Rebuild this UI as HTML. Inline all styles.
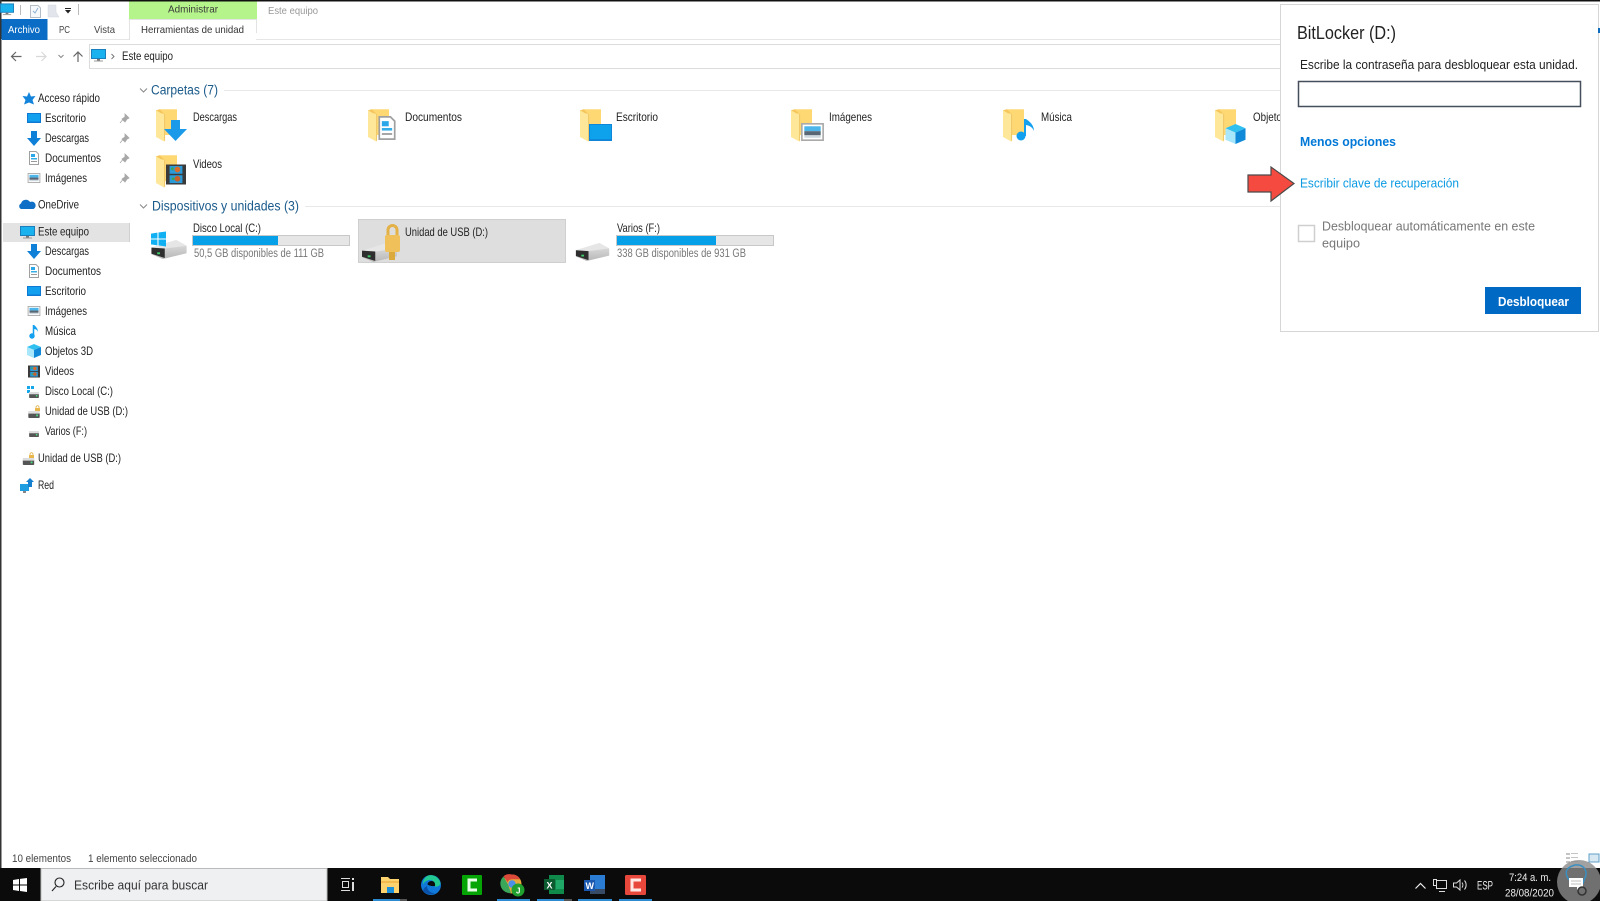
<!DOCTYPE html>
<html lang="es"><head><meta charset="utf-8"><title>Este equipo</title>
<style>html,body{margin:0;padding:0;background:#fff;overflow:hidden}svg{display:block;filter:blur(.3px)}text{font-family:"Liberation Sans",sans-serif;fill:#222;font-size:12px}</style></head>
<body>
<svg xmlns="http://www.w3.org/2000/svg" width="1600" height="901" viewBox="0 0 1600 901">
<defs>
<linearGradient id="dr" x1="0" y1="0" x2="0" y2="1"><stop offset="0" stop-color="#e4e4e4"/><stop offset="1" stop-color="#b8b8b8"/></linearGradient>
<symbol id="folder" viewBox="0 0 22 34" overflow="visible"><rect x="4" y="0" width="18" height="27" fill="#fdd873"/><polygon points="0,1 9,5 9,34 0,29" fill="#ffe79a"/><polygon points="0,1 4,0 9,5 5,4" fill="#f5c65c"/><line x1="9" y1="5" x2="9" y2="33" stroke="#efc565"/></symbol>
<symbol id="drive" viewBox="0 0 38 20" overflow="visible"><polygon points="0,8 26,0 37,6 37,14 12,20 0,15" fill="url(#dr)"/><polygon points="0,8 26,0 37,6 14,9" fill="#e6e6e6"/><polygon points="0,8 14,9 14,19 0,14.500" fill="#2e2e2e"/><rect x="6" y="13" width="3" height="2" fill="#3ecf6a"/></symbol>
<symbol id="sdrive" viewBox="0 0 13 8" overflow="visible"><rect x="0" y="2" width="13" height="6" rx="1" fill="#555"/><rect x="0" y="0" width="13" height="3" fill="#ddd"/><rect x="9" y="4" width="2" height="2" fill="#4ade80"/></symbol>
<symbol id="pin" viewBox="0 0 9 10" overflow="visible"><path d="M5 0l4 4-2 1-2 3-3-3 3-2zM2.500 6L0 9" fill="#a8a8a8" stroke="#a8a8a8" stroke-width=".8"/></symbol>
<symbol id="dl" viewBox="0 0 14 15" overflow="visible"><polygon points="4,0 10,0 10,7 14,7 7,15 0,7 4,7" fill="#0f80d8"/></symbol>
<symbol id="desk" viewBox="0 0 14 10" overflow="visible"><rect width="14" height="10" fill="#0e79d2"/><rect x="1" y="1" width="12" height="7.500" fill="#12a0ef"/></symbol>
<symbol id="doc" viewBox="0 0 10 14" overflow="visible"><path d="M.5.5H7L9.500 3V13.500H.5z" fill="#fff" stroke="#a0a0a0"/><rect x="2" y="3" width="4" height="3" fill="#2aa7e8"/><rect x="2" y="7" width="6" height="1.500" fill="#35aee8"/><rect x="2" y="10" width="6" height="1" fill="#999"/></symbol>
<symbol id="img" viewBox="0 0 14 11" overflow="visible"><rect x=".5" y=".5" width="13" height="10" fill="#fff" stroke="#aaa"/><rect x="2" y="2" width="10" height="3" fill="#4cb6ea"/><rect x="2" y="5" width="10" height="2.500" fill="#596775"/><rect x="2" y="7.500" width="10" height="1.500" fill="#cdd8df"/></symbol>
<symbol id="film" viewBox="0 0 14 14" overflow="visible"><rect width="14" height="14" fill="#3a3a3a"/><rect x="2.500" y="1" width="9" height="5.500" fill="#2a9ad8"/><rect x="2.500" y="7.500" width="9" height="5.500" fill="#2a9ad8"/><circle cx="8" cy="3.500" r="2" fill="#d86a2a"/><circle cx="8" cy="10" r="2" fill="#c8602a"/><circle cx="4.500" cy="3" r="1" fill="#3aa65a"/><circle cx="5" cy="10" r="1" fill="#3aa65a"/></symbol>
<symbol id="cube" viewBox="0 0 14 14" overflow="visible"><polygon points="7,0 14,3 7,6 0,3" fill="#2fc0f0"/><polygon points="0,3 7,6 7,14 0,11" fill="#a8e6fb"/><polygon points="14,3 7,6 7,14 14,11" fill="#0f89d8"/></symbol>
<symbol id="mon" viewBox="0 0 15 13" overflow="visible"><rect x=".5" y=".5" width="14" height="9" fill="#19b2ee" stroke="#1a80bd"/><rect x="6" y="10" width="3" height="1.500" fill="#777"/><rect x="3" y="11.500" width="9" height="1" fill="#999"/></symbol>
<symbol id="win" viewBox="0 0 14 14" overflow="visible"><path d="M0 2l6-1v5.500H0zM7 .9L14 0v6.500H7zM0 7.500h6V13l-6-1zM7 7.500h7V14l-7-1z"/></symbol>
<symbol id="lock" viewBox="0 0 14 12" overflow="visible"><path d="M4 6V3.500a3 3 0 0 1 6 0V6" fill="none" stroke="#e0ad3e" stroke-width="1.500"/><rect x="2" y="5" width="10" height="7" rx="1" fill="#eab84a"/></symbol>
</defs>

<rect width="1600" height="901" fill="#fff"/>
<rect width="1600" height="1.500" fill="#111"/>
<rect width="1.500" height="868" fill="#333"/>

<!-- title / ribbon -->
<use href="#mon" x="0" y="3" width="14" height="13"/>
<rect x="20" y="5" width="1" height="10" fill="#bbb"/>
<path d="M30.500 5.500H38L40.500 8V17.500H30.500z" fill="#f6f9fc" stroke="#b4bcc6"/><path d="M33 11l2 2 3-5" fill="none" stroke="#8ab0d0"/>
<path d="M48 5H56V12L59 17H48z" fill="#e2e6ec" stroke="#d4d8de" stroke-width=".5"/>
<rect x="65" y="8" width="6" height="1" fill="#222"/><polygon points="65,10 71,10 68,13.500" fill="#222"/>
<rect x="78" y="4" width="1" height="11" fill="#bbb"/>
<rect x="129" y="1.500" width="128" height="18" fill="#b4f48b"/>
<text x="168" y="12.500" textLength="50" lengthAdjust="spacingAndGlyphs" font-size="10" style="font-size:10.500px;fill:#3a3a3a">Administrar</text>
<text x="268" y="14" textLength="50" lengthAdjust="spacingAndGlyphs" style="font-size:10.500px;fill:#999">Este equipo</text>
<rect x="1" y="39" width="1279" height="1" fill="#e6e6e6"/>
<rect x="1.500" y="19" width="46" height="21" fill="#0a6cc4"/>
<text x="8" y="33" textLength="32" lengthAdjust="spacingAndGlyphs" style="font-size:10.500px;fill:#fff">Archivo</text>
<text x="59" y="33" textLength="11" lengthAdjust="spacingAndGlyphs" style="font-size:10.500px;fill:#444">PC</text>
<text x="94" y="33" textLength="21" lengthAdjust="spacingAndGlyphs" style="font-size:10.500px;fill:#444">Vista</text>
<path d="M129.500 40V19.500H256.500V33" fill="none" stroke="#e3e3e3"/><rect x="130" y="36" width="126" height="5" fill="#fff"/>
<text x="141" y="33" textLength="103" lengthAdjust="spacingAndGlyphs" style="font-size:10.500px;fill:#333">Herramientas de unidad</text>

<!-- address row -->
<path d="M21.500 56.500H12M16 52l-4.500 4.500L16 61" fill="none" stroke="#666" stroke-width="1.200"/>
<path d="M36 56.500h9.500M41.500 52l4.500 4.500-4.500 4.500" fill="none" stroke="#d8d8d8" stroke-width="1.200"/>
<path d="M58.500 55l2.500 2.500 2.500-2.500" fill="none" stroke="#888"/>
<path d="M78 62V52M73.500 56.500L78 52l4.500 4.500" fill="none" stroke="#666" stroke-width="1.200"/>
<rect x="89.500" y="44.500" width="1192" height="24" fill="#fff" stroke="#dcdcdc"/>
<use href="#mon" x="91" y="49" width="15" height="13"/>
<path d="M111.500 54l2.500 2.500-2.500 2.500" fill="none" stroke="#777"/>
<text x="122" y="60" textLength="51" lengthAdjust="spacingAndGlyphs" style="font-size:11.500px">Este equipo</text>

<!-- sidebar -->
<polygon points="29,92 31,96.500 35.500,96 32.500,100 34,104.500 29,102.500 24,104.500 25.500,100 22.500,96 27,96.500" fill="#1284dc"/>
<text x="38" y="102" textLength="62" lengthAdjust="spacingAndGlyphs">Acceso rápido</text>
<use href="#desk" x="27" y="113" width="14" height="10"/><text x="45" y="122" textLength="41" lengthAdjust="spacingAndGlyphs">Escritorio</text><use href="#pin" x="120" y="114" width="9" height="10"/>
<use href="#dl" x="27" y="131" width="14" height="15"/><text x="45" y="142" textLength="44" lengthAdjust="spacingAndGlyphs">Descargas</text><use href="#pin" x="120" y="134" width="9" height="10"/>
<use href="#doc" x="29" y="151" width="10" height="14"/><text x="45" y="162" textLength="56" lengthAdjust="spacingAndGlyphs">Documentos</text><use href="#pin" x="120" y="154" width="9" height="10"/>
<use href="#img" x="27" y="173" width="14" height="10"/><text x="45" y="182" textLength="42" lengthAdjust="spacingAndGlyphs">Imágenes</text><use href="#pin" x="120" y="174" width="9" height="10"/>
<path d="M21 209a3 3 0 0 1 0-5.500 5 5 0 0 1 9-1.500 3.600 3.600 0 0 1 3.500 7z" fill="#0f6fc6"/>
<text x="38" y="208.500" textLength="41" lengthAdjust="spacingAndGlyphs">OneDrive</text>
<rect x="3" y="223" width="127" height="19" fill="#e3e3e3"/><rect x="129" y="223" width="1" height="19" fill="#d0d0d0"/>
<use href="#mon" x="20" y="226" width="15" height="13"/>
<text x="38" y="235.500" textLength="51" lengthAdjust="spacingAndGlyphs">Este equipo</text>
<use href="#dl" x="27" y="244" width="14" height="15"/><text x="45" y="255" textLength="44" lengthAdjust="spacingAndGlyphs">Descargas</text>
<use href="#doc" x="29" y="264" width="10" height="14"/><text x="45" y="275" textLength="56" lengthAdjust="spacingAndGlyphs">Documentos</text>
<use href="#desk" x="27" y="286" width="14" height="10"/><text x="45" y="295" textLength="41" lengthAdjust="spacingAndGlyphs">Escritorio</text>
<use href="#img" x="27" y="306" width="14" height="10"/><text x="45" y="315" textLength="42" lengthAdjust="spacingAndGlyphs">Imágenes</text>
<path d="M33.500 325v11.500" stroke="#12a0ef" stroke-width="1.500"/><circle cx="32" cy="336" r="2.700" fill="#12a0ef"/><path d="M34 325q4 3 4 7-1-3-4-3z" fill="#12a0ef"/><text x="45" y="335" textLength="31" lengthAdjust="spacingAndGlyphs">Música</text>
<use href="#cube" x="27" y="344" width="14" height="14"/><text x="45" y="355" textLength="48" lengthAdjust="spacingAndGlyphs">Objetos 3D</text>
<use href="#film" x="28" y="365" width="12" height="13"/><text x="45" y="375" textLength="29" lengthAdjust="spacingAndGlyphs">Videos</text>
<rect x="27" y="386" width="3" height="3" fill="#16a6ea"/><rect x="31" y="386" width="3" height="3" fill="#16a6ea"/><rect x="27" y="390" width="3" height="3" fill="#16a6ea"/><use href="#sdrive" x="28" y="392" width="12" height="6"/><text x="45" y="395" textLength="68" lengthAdjust="spacingAndGlyphs">Disco Local (C:)</text>
<use href="#lock" x="34" y="405" width="7" height="7"/><use href="#sdrive" x="28" y="411" width="12" height="7"/><text x="45" y="415" textLength="83" lengthAdjust="spacingAndGlyphs">Unidad de USB (D:)</text>
<use href="#sdrive" x="28" y="431" width="12" height="6"/><text x="45" y="435" textLength="42" lengthAdjust="spacingAndGlyphs">Varios (F:)</text>
<use href="#lock" x="28" y="452" width="7" height="7"/><use href="#sdrive" x="22" y="458" width="13" height="7"/><text x="38" y="462" textLength="83" lengthAdjust="spacingAndGlyphs">Unidad de USB (D:)</text>
<rect x="20" y="484" width="9" height="7" fill="#1e9ee0"/><rect x="23" y="491" width="3" height="2" fill="#888"/><polygon points="30,478 34,482 32,482 32,487 28,487 28,482 26,482" fill="#1580cf"/>
<text x="38" y="489" textLength="16" lengthAdjust="spacingAndGlyphs">Red</text>

<!-- group headers -->
<path d="M140 87.500l3.500 3.500 3.500-3.500" transform="translate(0,1)" fill="none" stroke="#888"/>
<text x="151" y="94.500" textLength="67" lengthAdjust="spacingAndGlyphs" style="font-size:13.500px;fill:#1a5a8a">Carpetas (7)</text>
<rect x="224" y="90" width="1056" height="1" fill="#e8e8e8"/>
<path d="M140 204.500l3.500 3.500 3.500-3.500" fill="none" stroke="#888"/>
<text x="152" y="210.500" textLength="147" lengthAdjust="spacingAndGlyphs" style="font-size:13.500px;fill:#1a5a8a">Dispositivos y unidades (3)</text>
<rect x="305" y="206" width="975" height="1" fill="#e8e8e8"/>

<!-- folders -->
<use href="#folder" x="156" y="109" width="21" height="33"/><polygon points="171,120 180,120 180,129 187,129 175.500,141 164,129 171,129" fill="#1a9ae8"/>
<text x="193" y="121" textLength="44" lengthAdjust="spacingAndGlyphs">Descargas</text>
<use href="#folder" x="156" y="155" width="21" height="33"/><use href="#film" x="166" y="162" width="20" height="25"/>
<text x="193" y="168" textLength="29" lengthAdjust="spacingAndGlyphs">Videos</text>
<use href="#folder" x="368" y="109" width="21" height="33"/><use href="#doc" x="378" y="116" width="18" height="24"/>
<text x="405" y="121" textLength="57" lengthAdjust="spacingAndGlyphs">Documentos</text>
<use href="#folder" x="580" y="109" width="21" height="33"/><rect x="589" y="124" width="23" height="17" fill="#0f86d8"/><rect x="590" y="125" width="21" height="14" fill="#0ea2ec"/>
<text x="616" y="121" textLength="42" lengthAdjust="spacingAndGlyphs">Escritorio</text>
<use href="#folder" x="791" y="109" width="21" height="33"/><use href="#img" x="801" y="123" width="23" height="18"/>
<text x="829" y="121" textLength="43" lengthAdjust="spacingAndGlyphs">Imágenes</text>
<use href="#folder" x="1003" y="109" width="21" height="33"/><path d="M1025 119v17" stroke="#12a0ef" stroke-width="2"/><circle cx="1021" cy="136" r="4.500" fill="#12a0ef"/><path d="M1026 119q8 5 8 12-2-5-8-6z" fill="#12a0ef"/>
<text x="1041" y="121" textLength="31" lengthAdjust="spacingAndGlyphs">Música</text>
<use href="#folder" x="1215" y="109" width="21" height="33"/><use href="#cube" x="1225" y="124" width="21" height="20"/>
<text x="1253" y="121" textLength="49" lengthAdjust="spacingAndGlyphs">Objetos 3D</text>

<!-- drives -->
<use href="#drive" x="151" y="240" width="37" height="19"/><use href="#win" x="151" y="231" width="15" height="16" fill="#10b0f2"/>
<text x="193" y="232" textLength="68" lengthAdjust="spacingAndGlyphs">Disco Local (C:)</text>
<rect x="192.500" y="235.500" width="157" height="10" fill="#e6e6e6" stroke="#c8c8c8"/><rect x="193" y="236" width="85" height="9" fill="#06a0e8"/>
<text x="194" y="257" textLength="130" lengthAdjust="spacingAndGlyphs" style="font-size:11.500px;fill:#777">50,5 GB disponibles de 111 GB</text>

<rect x="358.500" y="219.500" width="207" height="43" fill="#dedede" stroke="#cfcfcf"/>
<use href="#drive" x="362" y="243" width="36" height="19"/>
<rect x="389" y="250" width="6" height="10" fill="#dcaa3c"/>
<path d="M388 236v-6a4.500 4.500 0 0 1 9 0v6" fill="none" stroke="#e3b146" stroke-width="3"/><rect x="385" y="235" width="15" height="17" rx="2" fill="#f0c05a"/>
<text x="405" y="236" textLength="83" lengthAdjust="spacingAndGlyphs">Unidad de USB (D:)</text>

<use href="#drive" x="575" y="243" width="36" height="18"/>
<text x="617" y="232" textLength="43" lengthAdjust="spacingAndGlyphs">Varios (F:)</text>
<rect x="616.500" y="235.500" width="157" height="10" fill="#e6e6e6" stroke="#c8c8c8"/><rect x="617" y="236" width="99" height="9" fill="#06a0e8"/>
<text x="617" y="257" textLength="129" lengthAdjust="spacingAndGlyphs" style="font-size:11.500px;fill:#777">338 GB disponibles de 931 GB</text>

<!-- BitLocker panel -->
<rect x="1280.500" y="4.500" width="318" height="327" fill="#fff" stroke="#d6d6d6"/>
<rect x="1598" y="28" width="2" height="5" fill="#0b6cc0"/>
<text x="1297" y="39" textLength="99" lengthAdjust="spacingAndGlyphs" style="font-size:18px">BitLocker (D:)</text>
<text x="1300" y="69" textLength="278" lengthAdjust="spacingAndGlyphs" style="font-size:13px">Escribe la contraseña para desbloquear esta unidad.</text>
<rect x="1298.500" y="81.500" width="282" height="25" fill="#fff" stroke="#454f5c" stroke-width="1.500"/>
<text x="1300" y="146" textLength="96" lengthAdjust="spacingAndGlyphs" style="font-size:13px;font-weight:bold;fill:#0078d7">Menos opciones</text>
<text x="1300" y="187.500" textLength="159" lengthAdjust="spacingAndGlyphs" style="font-size:13px;fill:#0a9ae2">Escribir clave de recuperación</text>
<polygon points="1248,175 1271,175 1271,167 1294,183.500 1271,201 1271,192 1248,192" fill="#f54a3f" stroke="#4a4a4a" stroke-width="1.200"/>
<rect x="1298.500" y="225.500" width="16" height="16" fill="#fff" stroke="#cfcfcf" stroke-width="1.500"/>
<text x="1322" y="230.500" textLength="213" lengthAdjust="spacingAndGlyphs" style="font-size:13px;fill:#777">Desbloquear automáticamente en este</text>
<text x="1322" y="247.500" textLength="38" lengthAdjust="spacingAndGlyphs" style="font-size:13px;fill:#777">equipo</text>
<rect x="1485" y="287" width="96" height="27" fill="#0069c4"/>
<text x="1498" y="306" textLength="71" lengthAdjust="spacingAndGlyphs" style="font-size:13px;fill:#fff;font-weight:bold">Desbloquear</text>

<!-- status -->
<text x="12" y="862" textLength="59" lengthAdjust="spacingAndGlyphs" style="font-size:11px;fill:#444">10 elementos</text>
<text x="88" y="862" textLength="109" lengthAdjust="spacingAndGlyphs" style="font-size:11px;fill:#444">1 elemento seleccionado</text>
<g fill="#c4c4c4"><rect x="1566" y="853" width="4" height="2"/><rect x="1566" y="857" width="4" height="2"/><rect x="1566" y="861" width="4" height="2"/><rect x="1571" y="853" width="7" height="1"/><rect x="1571" y="857" width="7" height="1"/><rect x="1571" y="861" width="7" height="1"/></g>
<rect x="1589" y="854" width="10" height="8" fill="#d8e8f2" stroke="#5f9fc8"/>

<!-- taskbar -->
<rect y="868" width="1600" height="33" fill="#0b0b0b"/>
<use href="#win" x="13" y="878" width="14" height="14" fill="#fff"/>
<rect x="41" y="868.500" width="286" height="32.500" fill="#eff0f2" stroke="#bbb"/>
<circle cx="59.500" cy="882.500" r="4.500" fill="none" stroke="#222" stroke-width="1.100"/><path d="M56 886.500L52 891" stroke="#222" stroke-width="1.100"/>
<text x="74" y="889.500" textLength="134" lengthAdjust="spacingAndGlyphs" style="font-size:13px;fill:#333">Escribe aquí para buscar</text>
<g fill="none" stroke="#ddd"><path d="M341 878.500h9M341 890.500h9"/><rect x="342.500" y="881.500" width="6" height="6"/></g><rect x="352" y="878" width="2" height="2" fill="#ddd"/><rect x="352" y="882" width="2" height="9" fill="#ddd"/>
<!-- explorer -->
<path d="M381 877h7l2 2h9v14h-18z" fill="#fcd36e"/><rect x="381" y="881" width="18" height="2" fill="#f3ba4e"/><rect x="387" y="887" width="7" height="6" fill="#1a90dc"/><rect x="373" y="899" width="27" height="2" fill="#2b8ad0"/><rect x="400" y="899" width="7" height="2" fill="#555"/>
<!-- edge -->
<circle cx="431" cy="885" r="10" fill="#0f78d8"/><path d="M428 875.500a10 10 0 0 1 12.500 8c-1 3-4 3.500-6 3 1.500-3-1-6.500-4.500-6.500-3 0-6 2-7 4.500a9 9 0 0 1 5-9z" fill="#22c990"/><path d="M427 886c0 4 3 7 8 7.500a10 10 0 0 1-12-3 9 9 0 0 1 4-4.500z" fill="#0a4fa8"/><path d="M427.500 884.500c0-2 2-3.500 4-3.500 2.500 0 4 2 3.500 5-3 .5-6-.5-7.500-1.500z" fill="#0b0b0b"/>
<!-- camtasia green -->
<rect x="462" y="875" width="20" height="20" rx="1" fill="#04a504"/><path d="M477 880h-8v10h8" fill="none" stroke="#e8ffe8" stroke-width="3"/>
<!-- chrome -->
<circle cx="512" cy="884" r="9.500" fill="#e8a83a"/><path d="M512 874.500a9.500 9.500 0 0 1 8.200 4.700H512a5 5 0 0 0-4.500 3l-4-6a9.500 9.500 0 0 1 8.500-1.700z" fill="#dd4a3a"/><path d="M503.500 876.500l4.500 8 3 8.500a9.500 9.500 0 0 1-7.500-16.500z" fill="#3aa65a"/><circle cx="512" cy="884" r="3.700" fill="#4a90e8"/><circle cx="518" cy="890" r="6.500" fill="#1fa02f"/><text x="516" y="893.500" style="font-size:8px;fill:#fff;font-weight:bold">J</text>
<rect x="497" y="899" width="33" height="2" fill="#2b8ad0"/>
<!-- excel -->
<rect x="549" y="875" width="15" height="19" fill="#0f8a4a"/><rect x="556" y="880" width="8" height="9" fill="#1fa867"/><rect x="544" y="879" width="11" height="11" fill="#0c5a30"/><text x="546.500" y="888.500" style="font-size:9px;font-weight:bold;fill:#fff">X</text>
<rect x="537" y="899" width="27" height="2" fill="#2b8ad0"/><rect x="564" y="899" width="8" height="2" fill="#555"/>
<!-- word -->
<rect x="590" y="875" width="15" height="19" fill="#2b7cd3"/><rect x="590" y="889" width="15" height="5" fill="#374a66"/><rect x="584" y="880" width="11" height="11" fill="#1a58b0"/><text x="585.500" y="889" style="font-size:9px;font-weight:bold;fill:#fff">W</text>
<rect x="578" y="899" width="34" height="2" fill="#2b8ad0"/>
<!-- camtasia red -->
<rect x="625" y="875" width="21" height="20" rx="1.500" fill="#e8483c"/><path d="M641 880h-9v10h9" fill="none" stroke="#ffe8e4" stroke-width="3"/>
<rect x="619" y="899" width="33" height="2" fill="#2b8ad0"/>
<!-- tray -->
<path d="M1415.500 888.500l5-5 5 5" fill="none" stroke="#eee" stroke-width="1.200"/>
<g fill="none" stroke="#ddd"><rect x="1436.500" y="880.500" width="10" height="8"/><path d="M1439 891.500h6"/><rect x="1433.500" y="879.500" width="3" height="6" fill="#0b0b0b"/></g>
<g fill="none" stroke="#ddd"><path d="M1453.500 883h3l3.500-3v10l-3.500-3h-3z"/><path d="M1462 882.500a4 4 0 0 1 0 5M1464.500 880.500a7 7 0 0 1 0 9"/></g>
<text x="1477" y="889.500" textLength="16" lengthAdjust="spacingAndGlyphs" style="font-size:12px;fill:#eee">ESP</text>
<text x="1509" y="881" textLength="42" lengthAdjust="spacingAndGlyphs" style="font-size:11px;fill:#eee">7:24 a. m.</text>
<text x="1505" y="896.500" textLength="49" lengthAdjust="spacingAndGlyphs" style="font-size:11px;fill:#eee">28/08/2020</text>
<!-- watermark -->
<circle cx="1579" cy="882" r="22" fill="#8a8a8a" fill-opacity=".8"/>
<path d="M1569 880c-4-6-5-12 6-15 9-1 13 6 10 13-1 2-2 4-2 6" fill="none" stroke="#3a8fc0" stroke-width="1.500"/>
<path d="M1569 878h14v9h-3l-3 3v-3h-8z" fill="#fff"/><path d="M1571 881h10M1571 884h10" stroke="#aaa" stroke-width=".8"/>
<circle cx="1582" cy="891" r="4" fill="none" stroke="#333" stroke-width="1.500"/>
</svg>
</body></html>
